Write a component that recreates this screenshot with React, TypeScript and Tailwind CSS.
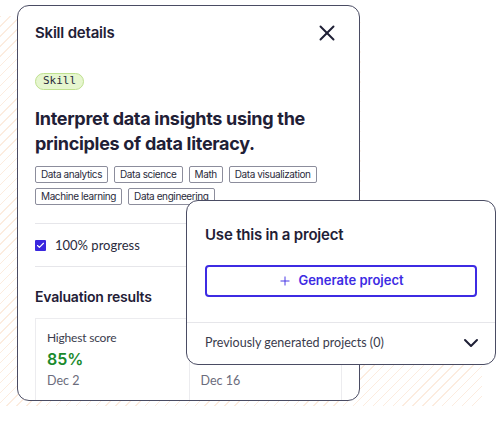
import { X, ChevronDown, Plus, Check } from 'lucide-react';

const tags = ['Data analytics', 'Data science', 'Math', 'Data visualization', 'Machine learning', 'Data engineering'];

export default function App() {
  return (
    <div className="relative w-[496px] h-[421px] overflow-hidden bg-white font-['Inter',sans-serif] text-[#1f2036]">
      {/* hatched backdrop: left strip + band under the popup */}
      <div className="absolute left-0 top-[16px] w-[482px] h-[390px] bg-[repeating-linear-gradient(135deg,#fcecdf_0px,#fcecdf_1px,transparent_1px,transparent_7px)] [mask-image:linear-gradient(to_right,black_360px,transparent_361px),linear-gradient(to_bottom,transparent_330px,black_350px)]" />

      {/* Skill details card */}
      <div className="relative ml-[17px] mt-[5px] w-[343px] h-[396px] overflow-hidden rounded-[12px] border border-[#4a4c63] bg-white px-[17px] pt-[14px]">
        <div className="flex items-center justify-between">
          <h2 className="text-[15px] font-semibold tracking-[-0.2px]">Skill details</h2>
          <X className="mr-[2px] h-[26px] w-[26px]" strokeWidth={1.8} />
        </div>

        <div className="mt-[27px] inline-flex h-[17px] items-center rounded-full border border-[#bfe08f] bg-[#e6f6cf] px-[7px] font-['DejaVu_Sans_Mono',monospace] text-[11px] text-[#2a2b3c]">
          Skill
        </div>

        <h1 className="mt-[16px] text-[18px] font-bold leading-[25px] tracking-[-0.3px]">
          Interpret data insights using the principles of data literacy.
        </h1>

        <div className="mt-[10px] flex flex-wrap gap-x-[6px] gap-y-[5px]">
          {tags.map((t) => (
            <span key={t} className="h-[17px] rounded-[2px] border border-[#8c8d9c] px-[5px] text-[10px] leading-[15px] tracking-[-0.4px] text-[#2a2b3c]">
              {t}
            </span>
          ))}
        </div>

        <div className="mt-[18px] border-t border-[#e6e6ea]" />

        <div className="flex h-[42px] items-center gap-[9px]">
          <span className="flex h-[11px] w-[11px] items-center justify-center rounded-[1px] bg-[#3a27de]">
            <Check className="h-[9px] w-[9px] text-white" strokeWidth={3} />
          </span>
          <span className="font-['Lato',sans-serif] text-[13px] text-[#2a2b3c]">100% progress</span>
        </div>

        <div className="border-t border-[#e6e6ea]" />

        <h3 className="mt-[19px] text-[14px] font-semibold tracking-[-0.2px]">Evaluation results</h3>

        <div className="mt-[11px] grid grid-cols-2 border border-[#ececef]">
          <div className="px-[11px] pt-[11px] pb-[20px]">
            <div className="font-['Lato',sans-serif] text-[12px] leading-[16px] tracking-[-0.2px] text-[#3a3b4c]">Highest score</div>
            <div className="mt-[2px] text-[16px] font-semibold leading-[22px] text-[#1a8a2c]">85%</div>
            <div className="mt-[2px] font-['Lato',sans-serif] text-[12.5px] leading-[18px] text-[#6b6c7c]">Dec 2</div>
          </div>
          <div className="border-l border-[#ececef] px-[11px] pt-[11px] pb-[20px]">
            {/* label and score sit under the popup */}
            <div className="h-[16px]" />
            <div className="mt-[2px] h-[22px]" />
            <div className="mt-[2px] font-['Lato',sans-serif] text-[12.5px] leading-[18px] text-[#6b6c7c]">Dec 16</div>
          </div>
        </div>
      </div>

      {/* Use this in a project popup */}
      <div className="absolute left-[186px] top-[200px] w-[310px] h-[165px] rounded-[12px] border border-[#4a4c63] bg-white">
        <div className="px-[18px] pt-[23px]">
          <h3 className="text-[15px] font-semibold tracking-[-0.2px]">Use this in a project</h3>
          <button className="mt-[18px] flex h-[32px] w-full items-center justify-center gap-[6px] rounded-[4px] border-2 border-[#3d2be3] text-[13px] font-semibold text-[#3d2be3]">
            <Plus className="h-[14px] w-[14px]" strokeWidth={1.6} />
            Generate project
          </button>
        </div>
        <div className="mt-[25px] flex h-[42px] items-center justify-between border-t border-[#e6e6ea] px-[18px]">
          <span className="font-['Lato',sans-serif] text-[12.5px] text-[#3a3b4c]">Previously generated projects (0)</span>
          <ChevronDown className="mr-[-6px] h-[24px] w-[24px]" strokeWidth={2} />
        </div>
      </div>
    </div>
  );
}
